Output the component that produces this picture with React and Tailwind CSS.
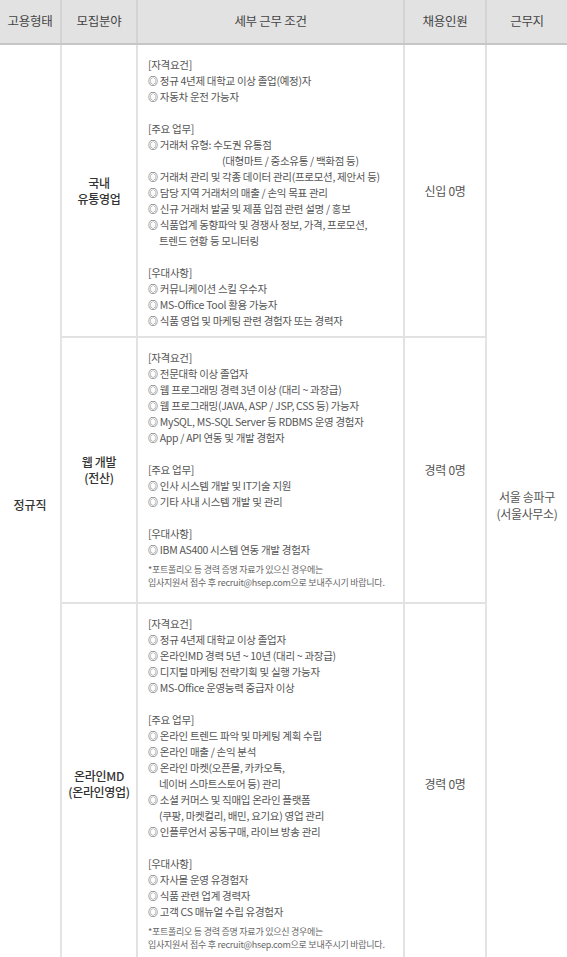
const font = { fontFamily: '"Noto Sans CJK KR", "Noto Sans", sans-serif' };

const rows = [
  {
    field: ["국내", "유통영업"],
    count: "신입 0명",
    lines: [
      ["h", "[자격요건]"],
      ["b", "정규 4년제 대학교 이상 졸업(예정)자"],
      ["b", "자동차 운전 가능자"],
      ["s"],
      ["h", "[주요 업무]"],
      ["b", "거래처 유형: 수도권 유통점"],
      ["w", "(대형마트 / 중소유통 / 백화점 등)"],
      ["b", "거래처 관리 및 각종 데이터 관리(프로모션, 제안서 등)"],
      ["b", "담당 지역 거래처의 매출 / 손익 목표 관리"],
      ["b", "신규 거래처 발굴 및 제품 입점 관련 설명 / 홍보"],
      ["b", "식품업계 동향파악 및 경쟁사 정보, 가격, 프로모션,"],
      ["i", "트렌드 현황 등 모니터링"],
      ["s"],
      ["h", "[우대사항]"],
      ["b", "커뮤니케이션 스킬 우수자"],
      ["b", "MS-Office Tool 활용 가능자"],
      ["b", "식품 영업 및 마케팅 관련 경험자 또는 경력자"],
    ],
    note: false,
  },
  {
    field: ["웹 개발", "(전산)"],
    count: "경력 0명",
    lines: [
      ["h", "[자격요건]"],
      ["b", "전문대학 이상 졸업자"],
      ["b", "웹 프로그래밍 경력 3년 이상 (대리 ~ 과장급)"],
      ["b", "웹 프로그래밍(JAVA, ASP / JSP, CSS 등) 가능자"],
      ["b", "MySQL, MS-SQL Server 등 RDBMS 운영 경험자"],
      ["b", "App / API 연동 및 개발 경험자"],
      ["s"],
      ["h", "[주요 업무]"],
      ["b", "인사 시스템 개발 및 IT기술 지원"],
      ["b", "기타 사내 시스템 개발 및 관리"],
      ["s"],
      ["h", "[우대사항]"],
      ["b", "IBM AS400 시스템 연동 개발 경험자"],
    ],
    note: true,
  },
  {
    field: ["온라인MD", "(온라인영업)"],
    count: "경력 0명",
    lines: [
      ["h", "[자격요건]"],
      ["b", "정규 4년제 대학교 이상 졸업자"],
      ["b", "온라인MD 경력 5년 ~ 10년 (대리 ~ 과장급)"],
      ["b", "디지털 마케팅 전략기획 및 실행 가능자"],
      ["b", "MS-Office 운영능력 중급자 이상"],
      ["s"],
      ["h", "[주요 업무]"],
      ["b", "온라인 트렌드 파악 및 마케팅 계획 수립"],
      ["b", "온라인 매출 / 손익 분석"],
      ["b", "온라인 마켓(오픈몰, 카카오톡,"],
      ["i", "네이버 스마트스토어 등) 관리"],
      ["b", "소셜 커머스 및 직매입 온라인 플랫폼"],
      ["i", "(쿠팡, 마켓컬리, 배민, 요기요) 영업 관리"],
      ["b", "인플루언서 공동구매, 라이브 방송 관리"],
      ["s"],
      ["h", "[우대사항]"],
      ["b", "자사몰 운영 유경험자"],
      ["b", "식품 관련 업계 경력자"],
      ["b", "고객 CS 매뉴얼 수립 유경험자"],
    ],
    note: true,
  },
];

function Line({ kind, text }) {
  if (kind === "s") return <div className="h-[16px]" />;
  if (kind === "b")
    return (
      <div className="h-[16px] whitespace-nowrap">
        <span className="text-[10px] leading-none font-bold text-[#555]">◎</span> {text}
      </div>
    );
  if (kind === "i") return <div className="h-[16px] whitespace-nowrap pl-[11px]">{text}</div>;
  if (kind === "w") return <div className="h-[16px] whitespace-nowrap pl-[74px]">{text}</div>;
  return <div className="h-[16px] whitespace-nowrap">{text}</div>;
}

function Note() {
  return (
    <div className="mt-[5px] text-[9px] leading-[13px] tracking-[-0.25px] text-[#666]">
      <div className="h-[13px] whitespace-nowrap">*포트폴리오 등 경력 증명 자료가 있으신 경우에는</div>
      <div className="h-[13px] whitespace-nowrap">입사지원서 접수 후 recruit@hsep.com으로 보내주시기 바랍니다.</div>
    </div>
  );
}

export default function App() {
  const th =
    "h-[44px] bg-[#e2e2e2] border-x-2 border-[#d3d3d3] border-b-2 border-b-[#c6c6c6] text-[12.5px] font-normal text-[#444] tracking-[-0.3px]";
  return (
    <div className="w-[567px] bg-white" style={font}>
      <table className="w-[567px] table-fixed border-collapse">
        <colgroup>
          <col className="w-[61px]" />
          <col className="w-[76px]" />
          <col className="w-[267px]" />
          <col className="w-[82px]" />
          <col className="w-[81px]" />
        </colgroup>
        <thead>
          <tr>
            <th className={th + " border-l-0"}>고용형태</th>
            <th className={th}>모집분야</th>
            <th className={th}>세부 근무 조건</th>
            <th className={th}>채용인원</th>
            <th className={th + " border-r-0"}>근무지</th>
          </tr>
        </thead>
        <tbody>
          {rows.map((r, i) => (
            <tr key={i}>
              {i === 0 && (
                <td
                  rowSpan={3}
                  className="border-r-2 border-[#e4e4e4] text-center align-middle text-[12px] font-medium text-[#333]"
                >
                  정규직
                </td>
              )}
              <td className="border-2 border-[#e2e2e2] text-center align-middle text-[12px] leading-[16px] font-medium text-[#333] tracking-[-0.3px]">
                <div>{r.field[0]}</div>
                <div>{r.field[1]}</div>
              </td>
              <td
                className={
                  "border-2 border-[#e2e2e2] pl-[10px] pr-[2px] pt-[12px] align-top text-[10.5px] leading-[16px] tracking-[-0.3px] text-[#555] " +
                  (r.note ? "pb-[13px]" : "pb-[7px]")
                }
              >
                {r.lines.map((l, j) => (
                  <Line key={j} kind={l[0]} text={l[1]} />
                ))}
                {r.note && <Note />}
              </td>
              <td className="border-2 border-[#e2e2e2] text-center align-middle text-[12px] text-[#555] tracking-[-0.3px]">
                {r.count}
              </td>
              {i === 0 && (
                <td
                  rowSpan={3}
                  className="border-l-2 border-[#e4e4e4] text-center align-middle text-[12px] leading-[17px] text-[#555] tracking-[-0.3px]"
                >
                  <div>서울 송파구</div>
                  <div>(서울사무소)</div>
                </td>
              )}
            </tr>
          ))}
        </tbody>
      </table>
    </div>
  );
}
